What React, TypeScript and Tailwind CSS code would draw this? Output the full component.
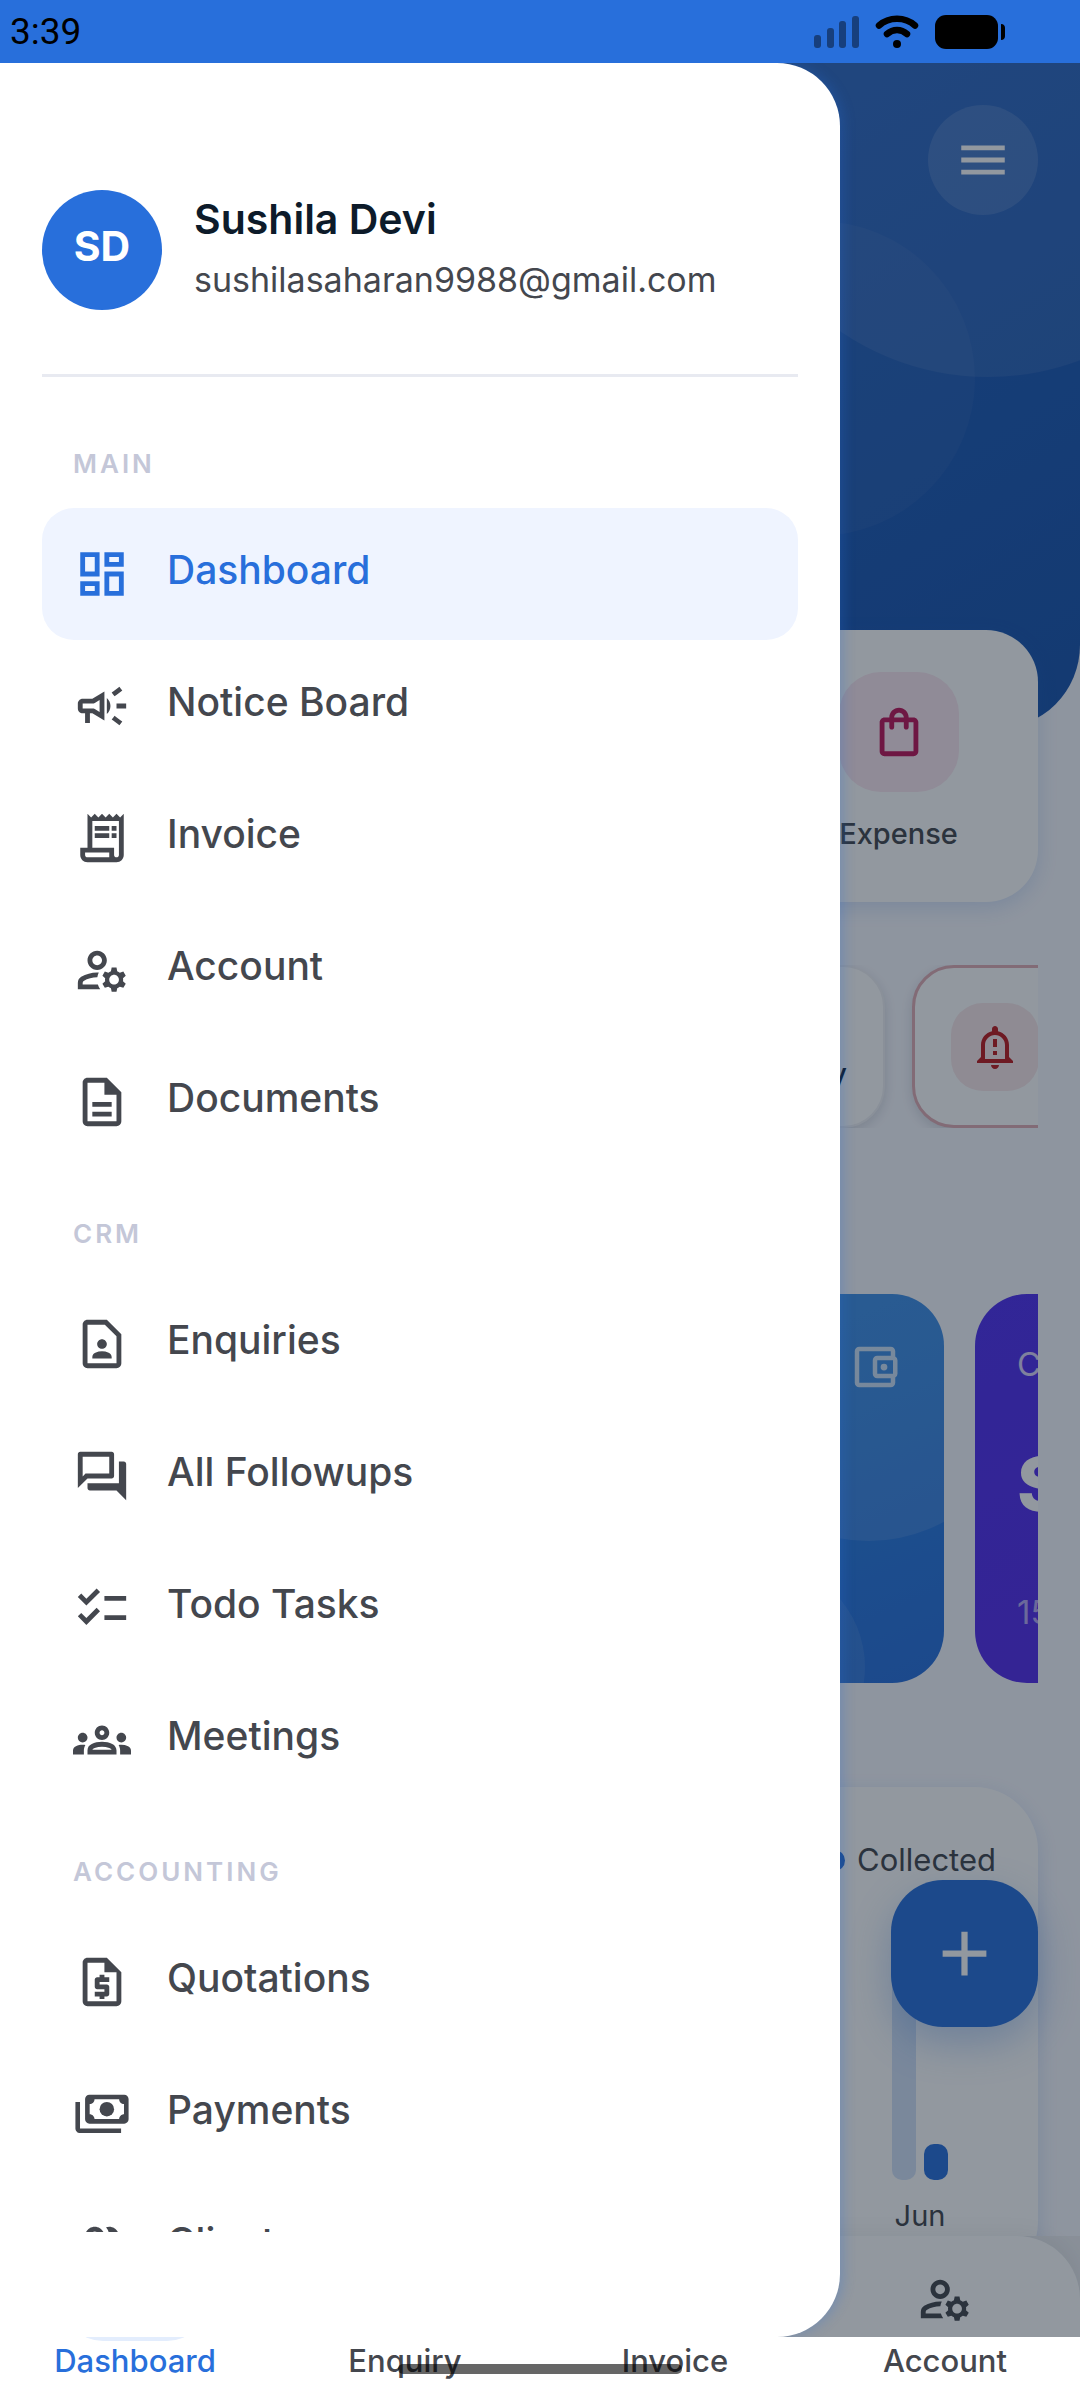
import type { ReactNode } from "react";
import type { IconType } from "react-icons";
import {
  MdAdd,
  MdChecklist,
  MdMenu,
  MdOutlineAccountBalanceWallet,
  MdOutlineCampaign,
  MdOutlineContactPage,
  MdOutlineDashboard,
  MdOutlineDescription,
  MdOutlineForum,
  MdOutlineGroups,
  MdOutlineManageAccounts,
  MdOutlineNotificationImportant,
  MdOutlinePeopleAlt,
  MdOutlineReceiptLong,
  MdOutlineRequestQuote,
  MdOutlineShoppingBag,
} from "react-icons/md";

type MenuIcon = IconType | ((props: { className?: string }) => ReactNode);

// Stack of bank notes
const NotesIcon = ({ className }: { className?: string }) => (
  <svg viewBox="0 0 24 24" className={className} fill="currentColor" aria-hidden="true">
    <path d="M2.9 19.9c-.5 0-1-.2-1.3-.6-.4-.4-.6-.8-.6-1.3V7h1.900v11h17v1.900z" />
    <path
      fillRule="evenodd"
      d="M6.800 4h14.400c1 0 1.800.8 1.800 1.800v8.400c0 1-.8 1.800-1.800 1.800H6.800c-1 0-1.800-.8-1.800-1.800V5.800C5 4.800 5.800 4 6.800 4zM8.900 5.900c0 1.100-.9 2-2 2v4.200c1.100 0 2 .9 2 2h10.200c0-1.100.9-2 2-2V7.900c-1.100 0-2-.9-2-2z"
    />
    <circle cx="14" cy="10" r="3" />
  </svg>
);

const sections: { title: string; items: { label: string; icon: MenuIcon; active?: boolean }[] }[] = [
  {
    title: "MAIN",
    items: [
      { label: "Dashboard", icon: MdOutlineDashboard, active: true },
      { label: "Notice Board", icon: MdOutlineCampaign },
      { label: "Invoice", icon: MdOutlineReceiptLong },
      { label: "Account", icon: MdOutlineManageAccounts },
      { label: "Documents", icon: MdOutlineDescription },
    ],
  },
  {
    title: "CRM",
    items: [
      { label: "Enquiries", icon: MdOutlineContactPage },
      { label: "All Followups", icon: MdOutlineForum },
      { label: "Todo Tasks", icon: MdChecklist },
      { label: "Meetings", icon: MdOutlineGroups },
    ],
  },
  {
    title: "ACCOUNTING",
    items: [
      { label: "Quotations", icon: MdOutlineRequestQuote },
      { label: "Payments", icon: NotesIcon },
      { label: "Clients", icon: MdOutlinePeopleAlt },
    ],
  },
];

const tabs: { label: string; icon: IconType; active?: boolean }[] = [
  { label: "Dashboard", icon: MdOutlineDashboard, active: true },
  { label: "Enquiry", icon: MdOutlineContactPage },
  { label: "Invoice", icon: MdOutlineReceiptLong },
  { label: "Account", icon: MdOutlineManageAccounts },
];

const StatusBar = () => (
  <div className="flex h-[63px] shrink-0 items-center justify-between bg-[#286fdb] pr-[75px] pl-2.5">
    <span className="font-[Roboto,sans-serif] text-[37px] leading-10 text-black">3:39</span>
    <div className="flex items-center gap-4">
      <svg viewBox="0 0 46 34" className="h-[34px] w-[46px]" fill="#173f7d" aria-hidden="true">
        <rect x="1" y="20" width="7" height="13" rx="3" />
        <rect x="14" y="13" width="7" height="20" rx="3" />
        <rect x="26" y="6" width="7" height="27" rx="3" />
        <rect x="39" y="1" width="7" height="32" rx="3" />
      </svg>
      <svg viewBox="0 0 44 34" className="h-[34px] w-11" fill="none" stroke="#000" strokeLinecap="round" aria-hidden="true">
        <path d="M4 10.500C14 1.500 30 1.500 40 10.500" strokeWidth="6.500" />
        <path d="M12 19C18 13.500 26 13.500 32 19" strokeWidth="6.500" />
        <circle cx="22" cy="29" r="4" fill="#000" stroke="none" />
      </svg>
      <svg viewBox="0 0 70 34" className="h-[34px] w-[70px]" aria-hidden="true">
        <rect x="0" y="0" width="63" height="34" rx="11" />
        <path d="M66 9c3 0 4 2 4 4v8c0 2-1 4-4 4z" />
      </svg>
    </div>
  </div>
);

const Header = () => (
  <header className="relative flex h-[666px] shrink-0 items-start justify-end overflow-hidden rounded-b-[84px] bg-linear-to-br from-[#2567cc] to-[#1a54ac] px-[42px] pt-[42px]">
    <div className="absolute -top-[210px] -right-[170px] size-[524px] rounded-full bg-white/7"></div>
    <div className="absolute top-[158px] right-[105px] size-[315px] rounded-full bg-white/4"></div>
    <button
      type="button"
      aria-label="Menu"
      className="relative flex size-[110px] items-center justify-center rounded-full bg-white/12 text-white"
    >
      <MdMenu className="size-[58px]" />
    </button>
  </header>
);

const QuickActions = () => (
  <section className="relative -mt-[99px] grid h-[272px] shrink-0 grid-cols-4 rounded-[52px] bg-white px-5 pt-[42px] shadow-[0_6px_20px_rgba(40,111,219,0.16)]">
    <button type="button" className="col-start-4 flex flex-col items-center gap-[22px]">
      <span className="flex size-[120px] items-center justify-center rounded-[42px] bg-[#fce7f0] text-[#be1558]">
        <MdOutlineShoppingBag className="size-[58px]" />
      </span>
      <span className="text-[29px] leading-10 font-medium text-[#44474e]">Expense</span>
    </button>
  </section>
);

const Reminders = () => (
  <section className="mt-[63px] flex shrink-0 justify-start gap-[27px] overflow-hidden">
    <div className="h-[163px] w-[408px] shrink-0 rounded-[42px] bg-white"></div>
    <div className="flex h-[163px] w-[408px] shrink-0 items-end justify-end rounded-[42px] border-2 border-[#f0f1f5] bg-white pr-9 pb-8 shadow-[0_4px_12px_rgba(13,27,42,0.14)]">
      <span className="text-[29px] leading-10 font-medium text-[#0d1b2a]">Enquiry</span>
    </div>
    <div className="flex h-[163px] w-[408px] shrink-0 items-center rounded-[42px] border-3 border-[#e2adb4] bg-white px-9 shadow-[0_4px_12px_rgba(13,27,42,0.14)]">
      <span className="flex size-[88px] items-center justify-center rounded-[32px] bg-[#f9e8ea] text-[#bd1a1e]">
        <MdOutlineNotificationImportant className="size-12" />
      </span>
    </div>
  </section>
);

const SummaryCards = () => (
  <section className="mt-[166px] flex shrink-0 gap-[31px] overflow-hidden">
    <div className="relative flex h-[389px] w-[902px] shrink-0 items-start justify-end overflow-hidden rounded-[52px] bg-linear-to-br from-[#2f97ec] to-[#286fdb] px-[42px] pt-[46px]">
      <div className="absolute -top-[68px] -right-[82px] size-[315px] rounded-full bg-white/10"></div>
      <div className="absolute right-[79px] -bottom-[89px] size-[210px] rounded-full bg-white/8"></div>
      <MdOutlineAccountBalanceWallet className="relative size-[54px] text-white/75" />
    </div>
    <div className="flex h-[389px] w-[902px] shrink-0 flex-col rounded-[52px] bg-linear-to-br from-[#4f30f0] to-[#5a28e8] px-[42px] pt-[50px] text-white">
      <span className="text-[33px] leading-10 text-white/80">Collected</span>
      <span className="mt-14 text-[74px] leading-[88px] font-extrabold">S</span>
      <span className="mt-16 text-[33px] leading-10 text-white/60">15</span>
    </div>
  </section>
);

const months = [
  { name: "Jan", total: 120, collected: 60 },
  { name: "Feb", total: 150, collected: 80 },
  { name: "Mar", total: 90, collected: 40 },
  { name: "Apr", total: 180, collected: 100 },
  { name: "May", total: 140, collected: 70 },
  { name: "Jun", total: 220, collected: 36 },
];

const RevenueChart = () => (
  <section className="mt-[104px] flex h-[498px] shrink-0 flex-col rounded-[63px] bg-white px-[42px] pt-[53px] text-[#44474e] shadow-[0_6px_20px_rgba(40,111,219,0.16)]">
    <div className="flex items-center justify-end gap-3">
      <span className="size-[21px] rounded-full bg-[#286fdb]"></span>
      <span className="text-[31px] leading-10">Collected</span>
    </div>
    <div className="mt-14 grid h-[300px] grid-cols-6 items-end">
      {months.map((month) => (
        <div key={month.name} className="flex flex-col items-center gap-4">
          <div className="flex items-end gap-2">
            <div className="w-6 rounded-[10px] bg-[#d3e2f8]" style={{ height: month.total }}></div>
            <div className="w-6 rounded-[10px] bg-[#286fdb]" style={{ height: month.collected }}></div>
          </div>
          <span className="text-[29px] leading-10">{month.name}</span>
        </div>
      ))}
    </div>
  </section>
);

const BottomNav = () => (
  <div className="relative shrink-0 bg-[#eeeff2]">
    <nav className="flex h-[164px] rounded-t-[63px] bg-white pt-[21px] shadow-[0_-4px_20px_rgba(13,27,42,0.06)]">
      {tabs.map(({ label, icon: Icon, active }) => (
        <button
          key={label}
          type="button"
          className={`flex flex-1 flex-col items-center ${active ? "text-[#286fdb]" : "text-[#44474e]"}`}
        >
          <span className={`flex h-[84px] w-[148px] items-center justify-center rounded-full ${active ? "bg-[#e3edfd]" : ""}`}>
            <Icon className="size-[58px]" />
          </span>
          <span className="text-[31px] leading-10 font-medium">{label}</span>
        </button>
      ))}
    </nav>
  </div>
);

const Drawer = () => (
  <aside className="absolute inset-y-0 left-0 flex w-[840px] max-w-[80%] flex-col rounded-r-[63px] bg-white px-[42px] pt-[127px] pb-[105px] shadow-[4px_0_12px_rgba(40,111,219,0.25)]">
    <div className="flex shrink-0 items-center gap-8 border-b-3 border-[#e8eaf1] pb-16">
      <span className="flex size-[120px] shrink-0 items-center justify-center rounded-full bg-[#286fdb] pb-2 text-[41px] leading-none font-bold text-white">
        SD
      </span>
      <div className="flex flex-col gap-3 pb-1">
        <span className="text-[41px] leading-[52px] font-semibold text-[#0d1b2a]">Sushila Devi</span>
        <span className="text-[34px] leading-[46px] text-[#44474e]">sushilasaharan9988@gmail.com</span>
      </div>
    </div>
    <div className="flex min-h-0 flex-1 flex-col overflow-hidden pt-[21px]">
      {sections.map((section) => (
        <section key={section.title} className="shrink-0">
          <h2 className="h-[110px] pt-12 pl-[31px] text-[26px] leading-9 font-semibold tracking-[3px] text-[#c4c7d8]">
            {section.title}
          </h2>
          <ul>
            {section.items.map(({ label, icon: Icon, active }) => (
              <li key={label}>
                <a
                  href="#"
                  className={`flex h-[132px] items-center gap-9 rounded-[32px] px-[31px] ${
                    active ? "bg-[#eff4ff] text-[#286fdb]" : "text-[#44474e]"
                  }`}
                >
                  <Icon className="size-[58px] shrink-0" />
                  <span className="pb-2 text-[39px] leading-[52px] font-medium">{label}</span>
                </a>
              </li>
            ))}
          </ul>
        </section>
      ))}
    </div>
  </aside>
);

const App = () => {
  return (
    <div className="relative flex h-screen flex-col overflow-hidden bg-[#f8f9ff] font-[Inter,'Open_Sans',sans-serif]">
      <StatusBar />
      <main className="flex min-h-0 flex-1 flex-col overflow-hidden">
        <Header />
        <div className="flex flex-col px-[42px]">
          <QuickActions />
          <Reminders />
          <SummaryCards />
          <RevenueChart />
        </div>
      </main>
      <BottomNav />

      {/* Floating action button */}
      <button
        type="button"
        aria-label="Add"
        className="absolute right-[42px] bottom-[373px] flex size-[147px] items-center justify-center rounded-[52px] bg-[#286fdb] text-white shadow-[0_16px_40px_rgba(40,111,219,0.3)]"
      >
        <MdAdd className="size-[75px]" />
      </button>

      {/* Scrim with the side drawer on top */}
      <div className="absolute inset-x-0 top-[63px] bottom-[63px] overflow-hidden bg-[#0d1b2a]/45">
        <Drawer />
      </div>

      {/* Home gesture handle */}
      <div className="absolute bottom-[26px] left-1/2 h-2.5 w-[284px] -translate-x-1/2 rounded-full bg-black/60"></div>
    </div>
  );
};

export default App;
